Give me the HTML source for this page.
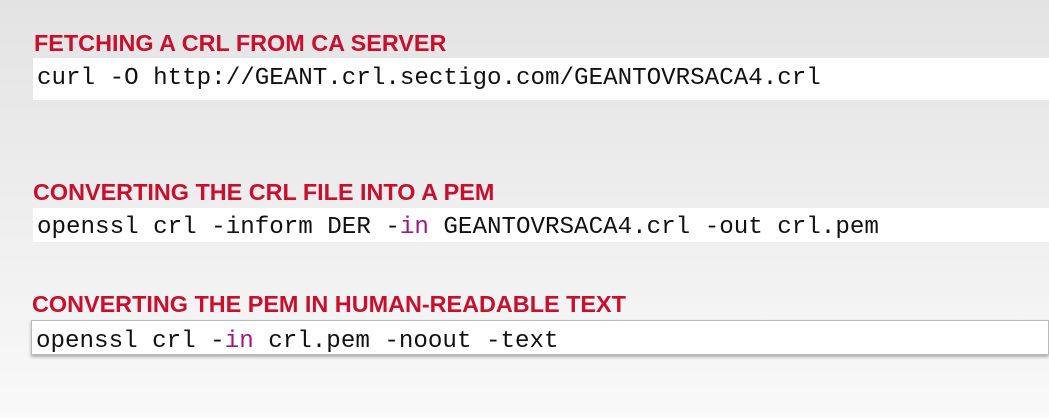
<!DOCTYPE html>
<html><head><style>
html,body{margin:0;padding:0}
body{width:1049px;height:418px;overflow:hidden;position:relative;background:linear-gradient(#e3e3e3,#f9f9f9);}
.h{position:absolute;font-family:"Liberation Sans",Arial,sans-serif;font-weight:bold;font-size:23.4px;color:#c8102e;letter-spacing:0;white-space:nowrap;line-height:26px}
.b{position:absolute;left:33px;right:0;background:#fff;font-family:"Liberation Mono",monospace;font-size:24.2px;color:#111;white-space:nowrap;box-sizing:border-box;padding-left:4px}
.m{color:#a0148c}
</style></head><body>
<div class="h" style="left:34px;top:30px">FETCHING A CRL FROM CA SERVER</div>
<div class="b" style="top:58px;height:42px;line-height:42px">curl -O http://GEANT.crl.sectigo.com/GEANTOVRSACA4.crl</div>
<div class="h" style="left:33px;top:179px">CONVERTING THE CRL FILE INTO A PEM</div>
<div class="b" style="top:208px;height:34px;line-height:40px">openssl crl -inform DER -<span class="m">in</span> GEANTOVRSACA4.crl -out crl.pem</div>
<div class="h" style="left:32px;top:291px">CONVERTING THE PEM IN HUMAN-READABLE TEXT</div>
<div class="b" style="left:31px;top:320px;height:35px;line-height:41px;padding-left:4px;border:1px solid #bbb;box-shadow:0 2px 3px rgba(0,0,0,0.3)">openssl crl -<span class="m">in</span> crl.pem -noout -text</div>
</body></html>
